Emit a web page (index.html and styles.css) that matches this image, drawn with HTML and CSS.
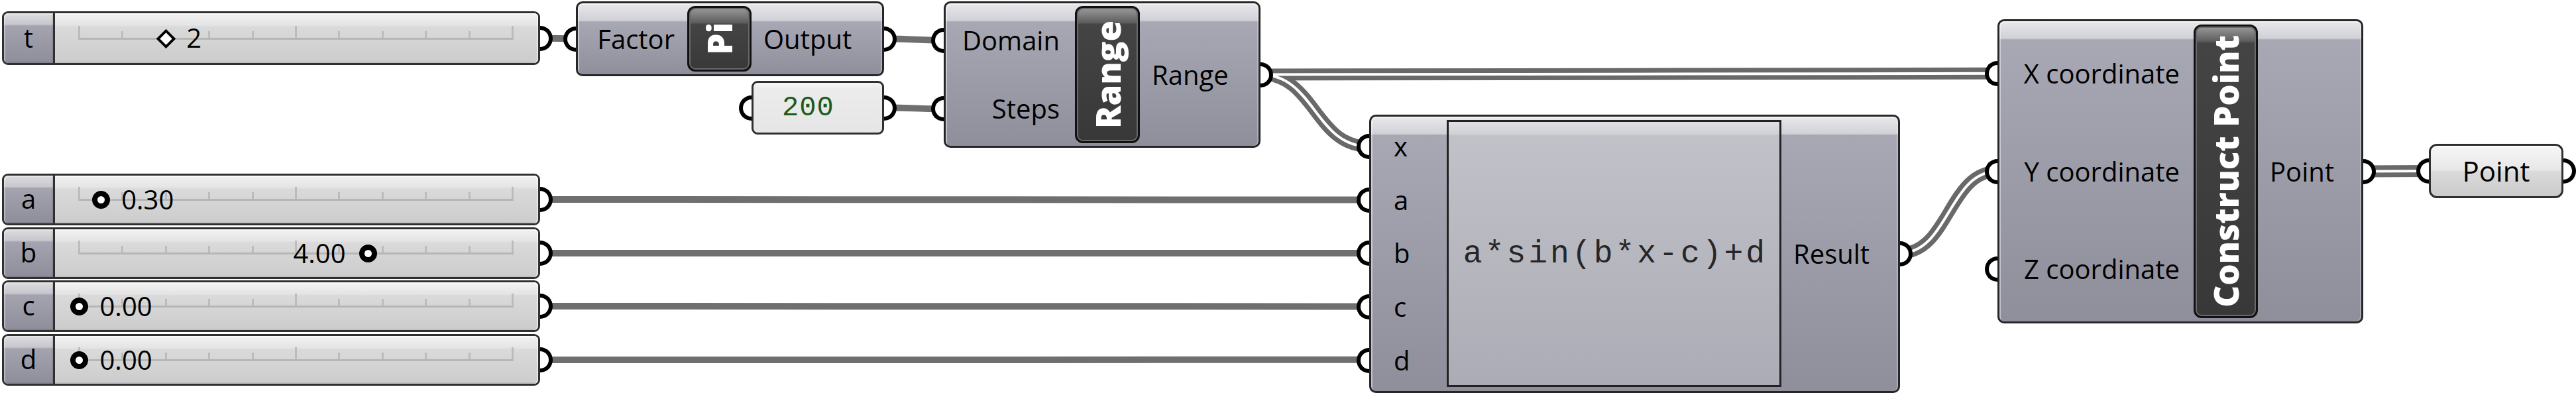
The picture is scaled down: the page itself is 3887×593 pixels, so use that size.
FILE: index.html
```html
<!DOCTYPE html>
<html>
<head>
<meta charset="utf-8">
<title>Grasshopper definition</title>
<link rel="stylesheet" href="styles.css">
</head>
<body>
<div class="canvas">
  <svg class="wires" width="3887" height="593" viewBox="0 0 3887 593">
    <g class="single">
      <path d="M815 57.5 L869 58.5"/>
      <path d="M1334 58.5 C1379 58.5 1379 60.75 1424 60.75"/>
      <path d="M1334 162.5 C1379 162.5 1379 164.25 1424 164.25"/>
      <path d="M815 301 C1440 301 1440 301.6 2066 301.6"/>
      <path d="M815 382 L2066 382"/>
      <path d="M815 462 C1440 462 1440 462.4 2066 462.4"/>
      <path d="M815 543 C1440 543 1440 542.8 2066 542.8"/>
    </g>
    <g class="double-out">
      <path d="M1902 112.5 C2458 112.5 2458 110.8 3014 110.8"/>
      <path d="M1902 112.5 C1984 112.5 1984 221.2 2066 221.2"/>
      <path d="M2867 382 C2940.5 382 2940.5 258.5 3014 258.5"/>
      <path d="M3566 258.5 C3615 258.5 3615 258 3665 258"/>
    </g>
    <g class="double-in">
      <path d="M1902 112.5 C2458 112.5 2458 110.8 3014 110.8"/>
      <path d="M1902 112.5 C1984 112.5 1984 221.2 2066 221.2"/>
      <path d="M2867 382 C2940.5 382 2940.5 258.5 3014 258.5"/>
      <path d="M3566 258.5 C3615 258.5 3615 258 3665 258"/>
    </g>
  </svg>

  <!-- number sliders -->
  <div class="slider n-t">
    <div class="slider-label">t</div>
    <div class="slider-body">
      <div class="track">
        <div class="marker" style="--pos:20%">
          <span class="diamond"></span>
          <span class="val after">2</span>
        </div>
      </div>
    </div>
    <span class="grip out"></span>
  </div>

  <div class="slider n-a">
    <div class="slider-label">a</div>
    <div class="slider-body">
      <div class="track">
        <div class="marker" style="--pos:5%">
          <span class="ring"></span>
          <span class="val after">0.30</span>
        </div>
      </div>
    </div>
    <span class="grip out"></span>
  </div>

  <div class="slider n-b">
    <div class="slider-label">b</div>
    <div class="slider-body">
      <div class="track">
        <div class="marker" style="--pos:66.67%">
          <span class="ring"></span>
          <span class="val before">4.00</span>
        </div>
      </div>
    </div>
    <span class="grip out"></span>
  </div>

  <div class="slider n-c">
    <div class="slider-label">c</div>
    <div class="slider-body">
      <div class="track">
        <div class="marker" style="--pos:0%">
          <span class="ring"></span>
          <span class="val after">0.00</span>
        </div>
      </div>
    </div>
    <span class="grip out"></span>
  </div>

  <div class="slider n-d">
    <div class="slider-label">d</div>
    <div class="slider-body">
      <div class="track">
        <div class="marker" style="--pos:0%">
          <span class="ring"></span>
          <span class="val after">0.00</span>
        </div>
      </div>
    </div>
    <span class="grip out"></span>
  </div>

  <!-- Pi component -->
  <div class="comp n-pi">
    <div class="inputs">
      <div class="port">Factor<span class="grip in"></span></div>
    </div>
    <div class="icon"><span>Pi</span></div>
    <div class="outputs">
      <div class="port">Output<span class="grip out"></span></div>
    </div>
  </div>

  <!-- panel 200 -->
  <div class="panel n-steps">
    <span class="panel-text">200</span>
    <span class="grip in"></span>
    <span class="grip out"></span>
  </div>

  <!-- Range component -->
  <div class="comp n-range">
    <div class="inputs">
      <div class="port">Domain<span class="grip in"></span></div>
      <div class="port">Steps<span class="grip in"></span></div>
    </div>
    <div class="icon"><span>Range</span></div>
    <div class="outputs">
      <div class="port">Range<span class="grip out"></span></div>
    </div>
  </div>

  <!-- Expression component -->
  <div class="comp n-expr">
    <div class="inputs">
      <div class="port">x<span class="grip in"></span></div>
      <div class="port">a<span class="grip in"></span></div>
      <div class="port">b<span class="grip in"></span></div>
      <div class="port">c<span class="grip in"></span></div>
      <div class="port">d<span class="grip in"></span></div>
    </div>
    <div class="expr-box"><span class="expr-text">a*sin(b*x-c)+d</span></div>
    <div class="outputs">
      <div class="port">Result<span class="grip out"></span></div>
    </div>
  </div>

  <!-- Construct Point component -->
  <div class="comp n-cp">
    <div class="inputs">
      <div class="port">X coordinate<span class="grip in"></span></div>
      <div class="port">Y coordinate<span class="grip in"></span></div>
      <div class="port">Z coordinate<span class="grip in"></span></div>
    </div>
    <div class="icon"><span>Construct Point</span></div>
    <div class="outputs">
      <div class="port">Point<span class="grip out"></span></div>
    </div>
  </div>

  <!-- Point parameter -->
  <div class="param n-point">
    <span class="param-text">Point</span>
    <span class="grip in"></span>
    <span class="grip out"></span>
  </div>
</div>
</body>
</html>
```

FILE: styles.css
```css
html, body {
  margin: 0;
  padding: 0;
  background: #ffffff;
}

.canvas {
  position: relative;
  width: 3887px;
  height: 593px;
  overflow: hidden;
  background: #ffffff;
  font-family: "Open Sans", "Noto Sans", sans-serif;
  font-size: 40px;
  color: #000;
  line-height: 1;
}

/* ---------- wires ---------- */
.wires {
  position: absolute;
  left: 0;
  top: 0;
  z-index: 0;
}
.wires path {
  fill: none;
}
.single path {
  stroke: #6f6f6f;
  stroke-width: 10;
}
.double-out path {
  stroke: #696969;
  stroke-width: 18;
}
.double-in path {
  stroke: #ffffff;
  stroke-width: 4;
}

/* ---------- grips ---------- */
.grip {
  position: absolute;
  top: 50%;
  width: 13px;
  height: 26px;
  margin-top: -19px;
  border: 6px solid #000;
  background: #fff;
  box-sizing: content-box;
  z-index: 2;
}
.grip.in {
  right: calc(100% + 3px);
  border-right: 0;
  border-radius: 19px 0 0 19px;
}
.grip.out {
  left: calc(100% + 3px);
  border-left: 0;
  border-radius: 0 19px 19px 0;
}

/* ---------- sliders ---------- */
.slider {
  position: absolute;
  left: 3px;
  width: 812px;
  height: 78px;
  box-sizing: border-box;
  border: 3px solid #303030;
  border-radius: 9px;
  display: flex;
  background: #d4d4d4;
  z-index: 1;
}
.n-t { top: 17px; height: 81px; }
.n-a { top: 262px; }
.n-b { top: 343px; }
.n-c { top: 423px; }
.n-d { top: 504px; }

.slider-label {
  width: 77px;
  flex: none;
  border-right: 3px solid #303030;
  border-radius: 6px 0 0 6px;
  display: flex;
  align-items: center;
  justify-content: center;
  padding-bottom: 2px;
  box-sizing: border-box;
  background: linear-gradient(#dcdce0 0, #c6c6cc 17px, #a4a4b0 19px, #8e8e9b 100%);
  box-shadow: inset 2px 2px 0 rgba(255,255,255,0.35), inset -2px -2px 0 rgba(0,0,0,0.08);
}

.slider-body {
  flex: 1;
  display: flex;
  align-items: center;
  padding-left: 35px;
  border-radius: 0 6px 6px 0;
  background: linear-gradient(#f2f2f2 0, #e4e4e4 18px, #dadada 20px, #cccccc 100%);
  box-shadow: inset 0 2px 0 rgba(255,255,255,0.7), inset -2px 0 0 rgba(255,255,255,0.5), inset 0 -2px 0 rgba(0,0,0,0.05);
}

.track {
  position: relative;
  width: 657px;
  height: 40px;
  background:
    linear-gradient(#b6b6b6, #b6b6b6) 0 19px / 100% 3px no-repeat,
    repeating-linear-gradient(90deg, #bcbcbc 0 3px, transparent 3px 65.4px) 0 9px / 100% 12px no-repeat,
    linear-gradient(90deg, #bcbcbc 0 3px, transparent 3px calc(50% - 1.5px), #bcbcbc calc(50% - 1.5px) calc(50% + 1.5px), transparent calc(50% + 1.5px) calc(100% - 3px), #bcbcbc calc(100% - 3px)) 0 1px / 100% 20px no-repeat;
}

.marker {
  position: absolute;
  left: calc(1.5px + var(--pos) * 654 / 657);
  top: 20.5px;
  width: 0;
  height: 0;
}
.ring {
  position: absolute;
  left: -13.5px;
  top: -13.5px;
  width: 11px;
  height: 11px;
  border: 8px solid #000;
  border-radius: 50%;
  background: #fff;
}
.diamond {
  position: absolute;
  left: -10.5px;
  top: -10.5px;
  width: 13px;
  height: 13px;
  border: 4px solid #000;
  background: #fff;
  transform: rotate(45deg);
}
.val {
  position: absolute;
  top: 0;
  transform: translateY(-52%);
  white-space: nowrap;
  line-height: 40px;
}
.val.after { left: 31px; }
.val.before { right: 34px; }

/* ---------- components ---------- */
.comp {
  position: absolute;
  box-sizing: border-box;
  border: 3px solid #262626;
  border-radius: 10px;
  display: flex;
  background: linear-gradient(#e8e8ec 0, #d0d0d6 26px, #a8a8b4 28px, #8f8f9c 100%);
  box-shadow: inset 2px 2px 0 rgba(255,255,255,0.45), inset -2px 0 0 rgba(255,255,255,0.25);
  z-index: 1;
}
.inputs, .outputs {
  display: flex;
  flex-direction: column;
}
.outputs { flex: 1; }
.port {
  flex: 1;
  position: relative;
  display: flex;
  align-items: center;
  white-space: nowrap;
}
.inputs .port {
  justify-content: flex-end;
  padding-right: 20px;
}
.outputs .port {
  padding-left: 18px;
}

.icon {
  flex: none;
  box-sizing: border-box;
  border: 3px solid #111;
  border-radius: 12px;
  display: flex;
  align-items: center;
  justify-content: center;
  background: linear-gradient(#9a9a9a 0, #5e5e5e 22px, #444 25px, #383838 100%);
  box-shadow: inset 0 0 0 2px #6a6a6a;
}
.icon span {
  writing-mode: vertical-rl;
  transform: rotate(180deg);
  color: #fff;
  font-family: "Open Sans", "Liberation Sans", sans-serif;
  font-weight: 800;
  font-size: 51px;
  line-height: 1;
  white-space: nowrap;
}

.n-pi {
  left: 869px;
  top: 2px;
  width: 465px;
  height: 113px;
  padding: 4px 0;
}
.n-pi .inputs { width: 165px; }
.n-pi .inputs .port { padding-right: 19px; }
.n-pi .icon { width: 97px; }

.n-range {
  left: 1424px;
  top: 2px;
  width: 478px;
  height: 221px;
  padding: 4px 0;
}
.n-range .inputs { width: 195px; }
.n-range .inputs .port { padding-right: 23px; }
.n-range .icon { width: 98px; }

.n-expr {
  left: 2066px;
  top: 173px;
  width: 801px;
  height: 420px;
  padding: 5px 0 6px;
}
.n-expr .inputs { width: 114px; }
.n-expr .inputs .port {
  justify-content: flex-start;
  padding-right: 0;
  padding-left: 34px;
}
.expr-box {
  width: 505px;
  flex: none;
  box-sizing: border-box;
  border: 3px solid #222;
  display: flex;
  align-items: center;
  justify-content: center;
  background: linear-gradient(#e0e0e5 0, #d0d0d6 18px, #c1c1c9 21px, #acacb6 100%);
}
.expr-text {
  font-family: "Liberation Mono", "Courier New", monospace;
  font-size: 48px;
  letter-spacing: 4px;
  color: #262626;
  margin-right: -4px;
}

.n-cp {
  left: 3014px;
  top: 29px;
  width: 552px;
  height: 459px;
  padding: 5px 0;
}
.n-cp .inputs { width: 293px; }
.n-cp .inputs .port { padding-right: 21px; }
.n-cp .icon { width: 97px; }

/* ---------- panel & param ---------- */
.panel {
  position: absolute;
  left: 1134px;
  top: 122px;
  width: 200px;
  height: 81px;
  box-sizing: border-box;
  border: 3px solid #303030;
  border-radius: 9px;
  display: flex;
  align-items: center;
  padding-left: 43px;
  background: linear-gradient(#f6f6f6 0, #ececec 8px, #e6e6e6 100%);
  z-index: 1;
}
.panel-text {
  font-family: "Liberation Mono", "Courier New", monospace;
  font-size: 42px;
  letter-spacing: 1px;
  color: #1d5a1d;
}

.param {
  position: absolute;
  left: 3665px;
  top: 217px;
  width: 203px;
  height: 82px;
  box-sizing: border-box;
  border: 3px solid #303030;
  border-radius: 12px;
  display: flex;
  align-items: center;
  justify-content: center;
  background: linear-gradient(#f6f6f6 0, #e8e8e8 36px, #dadada 39px, #cbcbcb 100%);
  box-shadow: inset 0 2px 0 #fff;
  z-index: 1;
}
.param-text {
  font-size: 42px;
}
```
